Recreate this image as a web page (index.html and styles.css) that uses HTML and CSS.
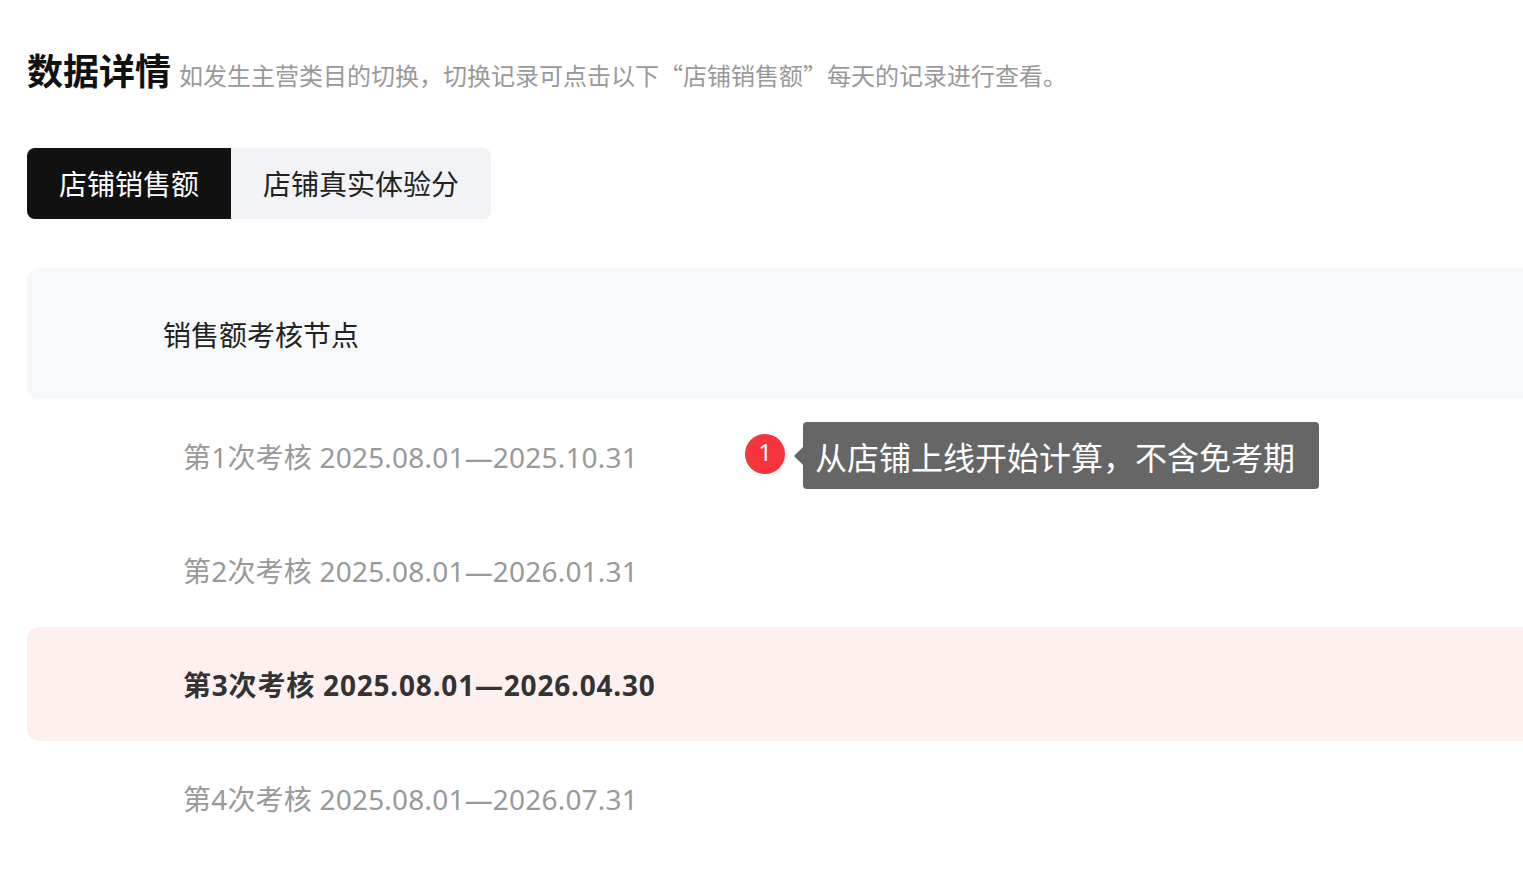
FILE: index.html
```html
<!DOCTYPE html>
<html lang="zh-CN">
<head>
<meta charset="utf-8">
<title>数据详情</title>
<link rel="stylesheet" href="styles.css">
</head>
<body>
<div class="page">
  <div class="title-row">
    <h1 class="title">数据详情</h1>
    <span class="subtitle">如发生主营类目的切换，切换记录可点击以下“店铺销售额”每天的记录进行查看。</span>
  </div>
  <div class="tabs">
    <div class="tab tab-active">店铺销售额</div>
    <div class="tab">店铺真实体验分</div>
  </div>
  <div class="table">
    <div class="table-head">销售额考核节点</div>
    <div class="row">
      <span class="row-text">第1次考核 2025.08.01—2025.10.31</span>
      <div class="tip-group">
        <span class="badge">1</span>
        <div class="tooltip">从店铺上线开始计算，不含免考期</div>
      </div>
    </div>
    <div class="row"><span class="row-text">第2次考核 2025.08.01—2026.01.31</span></div>
    <div class="row row-current"><span class="row-text">第3次考核 2025.08.01—2026.04.30</span></div>
    <div class="row"><span class="row-text">第4次考核 2025.08.01—2026.07.31</span></div>
  </div>
</div>
</body>
</html>
```

FILE: styles.css
```css
html, body {
  margin: 0;
  padding: 0;
  background: #ffffff;
}
body {
  font-family: "Noto Sans CJK SC", "Noto Sans", sans-serif;
  color: #222222;
  overflow: hidden;
}
.page {
  padding: 44px 0 0 27px;
}
.title-row {
  display: flex;
  align-items: baseline;
  gap: 8px;
  height: 50px;
}
.title {
  margin: 0;
  font-size: 36px;
  line-height: 50px;
  font-weight: 700;
  color: #111111;
}
.subtitle {
  font-size: 24px;
  color: #999999;
  white-space: nowrap;
}
.tabs {
  margin-top: 54px;
  display: inline-flex;
  background: #f2f3f6;
  border-radius: 8px;
  overflow: hidden;
}
.tab {
  height: 71px;
  padding: 0 32px 1px;
  box-sizing: border-box;
  display: flex;
  align-items: center;
  font-size: 28px;
  color: #222222;
  line-height: 1;
}
.tab-active {
  background: #111111;
  color: #ffffff;
}
.table {
  margin-top: 49px;
}
.table-head {
  height: 131px;
  display: flex;
  align-items: center;
  padding-left: 136px;
  background: #f7f8fa;
  border-radius: 12px 0 0 12px;
  font-size: 28px;
  color: #222222;
}
.row {
  position: relative;
  height: 114px;
  display: flex;
  align-items: center;
  padding-left: 156px;
  font-family: "Noto Sans", "Noto Sans CJK SC", sans-serif;
  font-size: 28px;
  color: #999999;
}
.row-text {
  letter-spacing: 0.2px;
}
.row-current {
  background: #fff0f0;
  border-radius: 12px 0 0 12px;
  color: #333333;
  font-weight: 700;
}
.row-current .row-text {
  letter-spacing: 0.8px;
}
.tip-group {
  position: absolute;
  left: 718px;
  top: 23px;
  display: flex;
  align-items: center;
}
.badge {
  width: 40px;
  height: 40px;
  border-radius: 50%;
  background: #f5353b;
  color: #ffffff;
  font-family: "Noto Sans", sans-serif;
  font-size: 24px;
  display: flex;
  align-items: center;
  justify-content: center;
  line-height: 1;
  padding-bottom: 3px;
  box-sizing: border-box;
  margin-right: 18px;
  position: relative;
  top: -2px;
}
.tooltip {
  position: relative;
  height: 67px;
  padding: 0 24px 0 12px;
  display: flex;
  align-items: center;
  background: #666666;
  border-radius: 4px;
  color: #ffffff;
  font-family: "Noto Sans CJK SC", sans-serif;
  font-size: 32px;
  font-weight: 400;
  white-space: nowrap;
}
.tooltip::before {
  content: "";
  position: absolute;
  left: -9px;
  top: 50%;
  margin-top: -9px;
  border-top: 9px solid transparent;
  border-bottom: 9px solid transparent;
  border-right: 9px solid #666666;
}
```
